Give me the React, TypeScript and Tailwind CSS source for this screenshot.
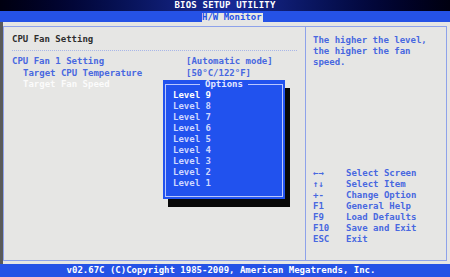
const mono = "font-['DejaVu_Sans_Mono','Liberation_Mono',monospace]";

const levels = ['Level 9', 'Level 8', 'Level 7', 'Level 6', 'Level 5', 'Level 4', 'Level 3', 'Level 2', 'Level 1'];

const keys: [string, string][] = [
  ['←→', 'Select Screen'],
  ['↑↓', 'Select Item'],
  ['+-', 'Change Option'],
  ['F1', 'General Help'],
  ['F9', 'Load Defaults'],
  ['F10', 'Save and Exit'],
  ['ESC', 'Exit'],
];

function OptionsPopup() {
  return (
    <div className="absolute left-[159px] top-[53px] w-[122px] h-[119px] bg-[#2152ee] shadow-[5px_8px_0_0_#080808]">
      {/* inner frame */}
      <div className="absolute left-[2px] right-[2px] top-[4px] bottom-[2px] border border-[#b8c6ff]" />
      <div className="absolute left-0 right-0 top-0 h-[9px] flex justify-center">
        <span className="bg-[#2152ee] px-[5px] text-[9px] leading-[9px] font-bold text-[#e4e8ff]">Options</span>
      </div>
      <div className="absolute left-[10px] top-[10px] flex flex-col">
        {levels.map((l, i) => (
          <div
            key={l}
            className={`h-[11px] text-[9px] leading-[11px] font-bold ${i === 0 ? 'text-white' : 'text-[#cfd8ff]'}`}
          >
            {l}
          </div>
        ))}
      </div>
    </div>
  );
}

export default function App() {
  return (
    <div className={`w-[450px] h-[277px] flex flex-col overflow-hidden bg-[#e6e6e4] ${mono}`}>
      {/* title bar */}
      <div className="h-[11px] bg-gradient-to-r from-[#000010] via-[#1a2c9a] to-[#000010] flex justify-center items-center">
        <span className="text-[9px] leading-[9px] font-bold text-white tracking-[0.2px]">BIOS SETUP UTILITY</span>
      </div>

      {/* tab bar */}
      <div className="h-[11px] bg-[#2552e6] flex items-end pl-[202px]">
        <div className="h-[9px] w-[61px] bg-[#e6e6e4] text-[9px] leading-[9px] font-bold text-[#2552e6]">H/W Monitor</div>
      </div>

      {/* body */}
      <div className="flex-1 flex pt-[4px] pb-[3px] pr-[3px] border-l-[3px] border-[#5a5a5a]">
        <div className="flex-1 flex border border-[#8ea2ea]">
          {/* left panel */}
          <div className="relative w-[302px] border-r border-[#8ea2ea] pl-[8px] pr-[8px] pt-[7px]">
            <div className="h-[11px] text-[9px] leading-[11px] font-bold text-[#2e2e2e]">CPU Fan Setting</div>
            <div className="mt-[5px] border-t border-dotted border-[#a8b6e8]" />
            <div className="mt-[5px] flex flex-col text-[9px] leading-[11.5px] font-bold text-[#4868e0]">
              <div className="flex">
                <span className="w-[174px]">CPU Fan 1 Setting</span>
                <span>[Automatic mode]</span>
              </div>
              <div className="flex">
                <span className="w-[174px] pl-[11px]">Target CPU Temperature</span>
                <span>[50°C/122°F]</span>
              </div>
              <div className="flex text-[#fbfbfb]">
                <span className="w-[174px] pl-[11px]">Target Fan Speed</span>
              </div>
            </div>
            <OptionsPopup />
          </div>

          {/* right panel */}
          <div className="flex-1 flex flex-col justify-between pl-[7px] pt-[8px] pb-[15px] text-[9px] leading-[11px] font-bold text-[#4868e0]">
            <div>
              <div>The higher the level,</div>
              <div>the higher the fan</div>
              <div>speed.</div>
            </div>
            <div className="flex flex-col">
              {keys.map(([k, d]) => (
                <div key={k} className="flex h-[11px]">
                  <span className="w-[33px]">{k}</span>
                  <span>{d}</span>
                </div>
              ))}
            </div>
          </div>
        </div>
      </div>

      {/* footer */}
      <div className="h-[13px] bg-[#2552e6] flex justify-center items-center">
        <span className="text-[9px] leading-[9px] font-bold text-white pr-[8px]">v02.67C (C)Copyright 1985-2009, American Megatrends, Inc.</span>
      </div>
    </div>
  );
}
